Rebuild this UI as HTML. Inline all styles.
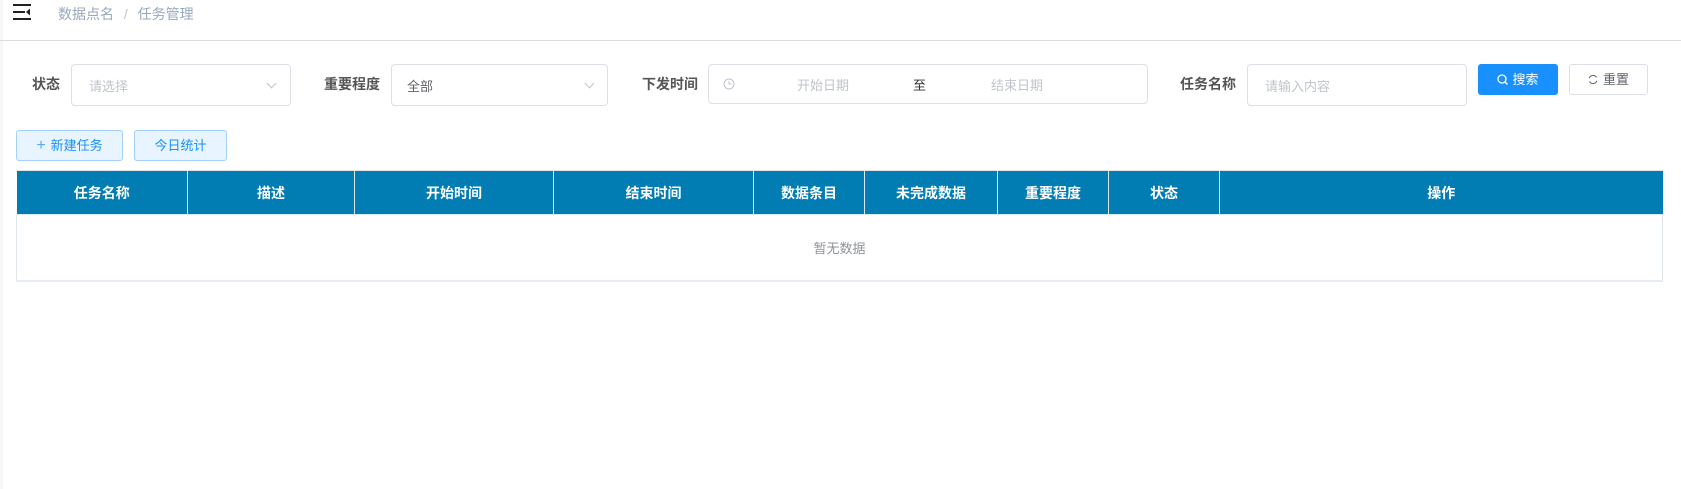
<!DOCTYPE html>
<html><head><meta charset="utf-8"><style>
*{box-sizing:border-box;margin:0;padding:0}
body{width:1681px;height:489px;background:#fff;font-family:"Liberation Sans","Noto Sans CJK SC",sans-serif;position:relative;overflow:hidden;font-size:14px;color:#606266}
.a{position:absolute}
.lbl{position:absolute;font-weight:bold;color:#555;font-size:14px;line-height:20px}
.box{position:absolute;border:1px solid #dcdfe6;border-radius:4px;background:#fff}
.ph{position:absolute;color:#c0c4cc;font-size:13px}
.chev{position:absolute;width:7px;height:7px;border-right:1px solid #c0c4cc;border-bottom:1px solid #c0c4cc;transform:rotate(45deg)}
table{position:absolute;left:16px;top:170px;width:1647px;border-collapse:collapse}
th{background:#027db4;color:#fff;font-weight:bold;font-size:14px;height:44px;border-right:1px solid #e0e8ef;border-top:1px solid #dfe6ec}
th:last-child{border-right:none}
td{height:66px;text-align:center;color:#909399;font-size:13px;border:1px solid #dfe6ec;border-bottom:2px solid #e6ebf5}
</style></head><body>
<div class="a" style="left:0;top:0;width:3px;height:489px;background:#f7f7f7"></div>
<svg class="a" style="left:13px;top:4px" width="18" height="16" viewBox="0 0 18 16"><g fill="#222"><rect x="0" y="0" width="18" height="2"/><rect x="0" y="7" width="12" height="2"/><rect x="0" y="14" width="18" height="2"/><path d="M17 4.5 L13 8 L17 11.5Z"/></g></svg>
<div class="a" style="left:58px;top:4px;font-size:14px;color:#97a8be">数据点名 <span style="color:#c0c4cc;margin:0 6px">/</span> 任务管理</div>
<div class="a" style="left:0;top:40px;width:1681px;height:1px;background:#dcdcdc"></div>

<div class="lbl" style="left:32px;top:74px">状态</div>
<div class="box" style="left:71px;top:64px;width:220px;height:42px"></div>
<div class="ph" style="left:89px;top:76px">请选择</div>
<div class="chev" style="left:268px;top:80px"></div>

<div class="lbl" style="left:324px;top:74px">重要程度</div>
<div class="box" style="left:391px;top:64px;width:217px;height:42px"></div>
<div class="a" style="left:407px;top:76px;font-size:13px;color:#606266">全部</div>
<div class="chev" style="left:586px;top:80px"></div>

<div class="lbl" style="left:642px;top:74px">下发时间</div>
<div class="box" style="left:708px;top:64px;width:440px;height:40px"></div>
<svg class="a" style="left:723px;top:78px" width="12" height="12" viewBox="0 0 12 12"><circle cx="6" cy="6" r="5" fill="none" stroke="#c0c4cc"/><path d="M6 3V6H8.5" fill="none" stroke="#c0c4cc"/></svg>
<div class="ph" style="left:797px;top:75px">开始日期</div>
<div class="a" style="left:913px;top:75px;font-size:13px;color:#303133">至</div>
<div class="ph" style="left:991px;top:75px">结束日期</div>

<div class="lbl" style="left:1180px;top:74px">任务名称</div>
<div class="box" style="left:1247px;top:64px;width:220px;height:42px"></div>
<div class="ph" style="left:1265px;top:76px">请输入内容</div>

<div class="a" style="left:1478px;top:64px;width:80px;height:31px;background:#1890ff;border-radius:3px;color:#fff;font-size:13px;line-height:31px;text-align:center">
<svg style="vertical-align:-1px;margin-right:4px" width="11" height="11" viewBox="0 0 11 11"><circle cx="5" cy="5" r="4" fill="none" stroke="#fff" stroke-width="1.3"/><path d="M8 8L10.5 10.5" stroke="#fff" stroke-width="1.3"/></svg>搜索</div>
<div class="a" style="left:1569px;top:64px;width:79px;height:31px;border:1px solid #dcdfe6;border-radius:3px;color:#606266;font-size:13px;line-height:29px;text-align:center">
<svg style="vertical-align:-1px;margin-right:5px" width="10" height="11" viewBox="0 0 10 11"><path d="M8.5 3.5A4 4 0 0 0 1.2 4.2M1.5 7.5A4 4 0 0 0 8.8 6.8" fill="none" stroke="#606266" stroke-width="1"/></svg>重置</div>

<div class="a" style="left:16px;top:130px;width:107px;height:31px;background:#e8f4ff;border:1px solid #a3d0fd;border-radius:3px;color:#1890ff;font-size:13px;line-height:29px;text-align:center"><span style="font-size:16px;margin-right:5px;color:#5aa9f5">+</span>新建任务</div>
<div class="a" style="left:134px;top:130px;width:93px;height:31px;background:#e8f4ff;border:1px solid #a3d0fd;border-radius:3px;color:#1890ff;font-size:13px;line-height:29px;text-align:center">今日统计</div>

<table>
<tr><th style="width:171px">任务名称</th><th style="width:167px">描述</th><th style="width:199px">开始时间</th><th style="width:200px">结束时间</th><th style="width:111px">数据条目</th><th style="width:133px">未完成数据</th><th style="width:111px">重要程度</th><th style="width:111px">状态</th><th>操作</th></tr>
<tr><td colspan="9">暂无数据</td></tr>
</table>
</body></html>
